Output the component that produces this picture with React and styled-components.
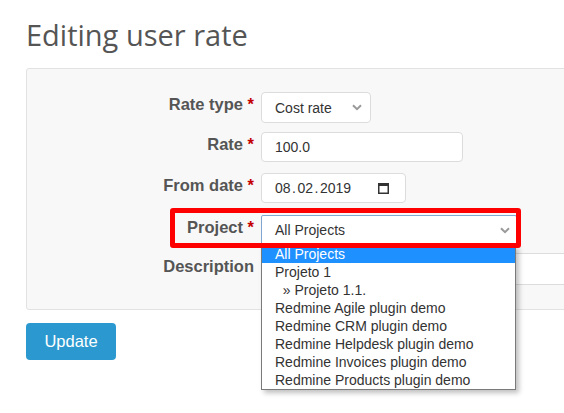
import React from "react";
import styled, { createGlobalStyle } from "styled-components";

const GlobalStyle = createGlobalStyle`
  html {
    overflow: hidden;
  }
  body {
    margin: 0;
    padding: 0;
    min-height: 413px;
    background: #ffffff;
    font-family: "Liberation Sans", Arial, sans-serif;
    color: #333;
  }
`;

const Page = styled.div`
  width: 760px;
  padding: 17px 0 0 26px;
`;

const Title = styled.h2`
  margin: 0 0 15px;
  font-family: "Open Sans", "Liberation Sans", sans-serif;
  font-weight: 400;
  font-size: 29px;
  line-height: 36px;
  color: #555;
`;

const Panel = styled.div`
  width: 700px;
  box-sizing: border-box;
  background: #f8f8f8;
  border: 1px solid #e2e2e2;
  border-radius: 3px;
  padding: 23px 0 24px;
  display: flex;
  flex-direction: column;
`;

const Row = styled.div`
  position: relative;
  display: grid;
  grid-template-columns: 228px auto;
  column-gap: 6px;
  align-items: start;
  margin-top: ${(p) => p.$mt || 0}px;
  height: ${(p) => p.$h}px;
`;

const Label = styled.label`
  text-align: right;
  padding: ${(p) => p.$pt ?? 2}px 1px 0 0;
  font-size: 16.5px;
  line-height: 20px;
  font-weight: 700;
  color: #555;
`;

const Required = styled.span`
  color: #c40000;
`;

const Control = styled.div`
  position: relative;
  box-sizing: border-box;
  width: ${(p) => p.$w}px;
  height: 100%;
  background: #fff;
  border: 1px solid ${(p) => (p.$focus ? "#7fa7cf" : "#dcdcdc")};
  border-radius: ${(p) => (p.$focus ? 2 : 4)}px;
  display: flex;
  align-items: center;
  padding: 0 ${(p) => p.$pr ?? 8}px 0 13px;
  font-size: 14px;
  color: #333;
`;

const Value = styled.span`
  flex: 1;
  white-space: nowrap;
`;

const Dot = styled.span`
  margin: 0 1.5px;
`;

const Highlight = styled.div`
  position: absolute;
  left: 143px;
  top: -7px;
  width: 351px;
  height: 40px;
  box-sizing: border-box;
  border: 5px solid #ff0000;
  border-radius: 3px;
  z-index: 3;
  pointer-events: none;
`;

const OptionList = styled.ul`
  position: absolute;
  top: 29px;
  left: -1px;
  width: 255px;
  box-sizing: border-box;
  margin: 0;
  padding: 0;
  list-style: none;
  background: #fff;
  border: 1px solid #7a7a7a;
  border-top: none;
  box-shadow: 3px 3px 5px rgba(0, 0, 0, 0.25);
  z-index: 2;
`;

const Option = styled.li`
  height: 18px;
  line-height: 18px;
  padding-left: 13px;
  font-size: 14px;
  white-space: pre;
  color: ${(p) => (p.$selected ? "#fff" : "#333")};
  background: ${(p) => (p.$selected ? "#1e90ff" : "transparent")};
`;

const Actions = styled.div`
  margin-top: 13px;
`;

const Button = styled.button`
  width: 90px;
  height: 37px;
  border: none;
  border-radius: 4px;
  background: #2b99cf;
  color: #fff;
  font-family: "Liberation Sans", Arial, sans-serif;
  font-size: 16.5px;
  padding: 0;
  cursor: pointer;
`;

const Chevron = ({ w = 10 }) => (
  <svg width={w} height="7" viewBox="0 0 10 7" fill="none">
    <path d="M1 1.2 L5 5.2 L9 1.2" stroke="#9a9a9a" strokeWidth="2" />
  </svg>
);

const CalendarIcon = () => (
  <svg width="11" height="11" viewBox="0 0 11 11">
    <rect x="0.75" y="0.75" width="9.5" height="9.5" fill="none" stroke="#333" strokeWidth="1.5" />
    <rect x="0" y="0" width="11" height="3" fill="#333" />
  </svg>
);

const projects = [
  "All Projects",
  "Projeto 1",
  "\u00a0\u00a0» Projeto 1.1.",
  "Redmine Agile plugin demo",
  "Redmine CRM plugin demo",
  "Redmine Helpdesk plugin demo",
  "Redmine Invoices plugin demo",
  "Redmine Products plugin demo",
];

export default function App() {
  return (
    <>
      <GlobalStyle />
      <Page>
        <Title>Editing user rate</Title>
        <Panel>
          <Row $h={31}>
            <Label>
              Rate type <Required>*</Required>
            </Label>
            <Control $w={110}>
              <Value>Cost rate</Value>
              <Chevron />
            </Control>
          </Row>
          <Row $h={30} $mt={9}>
            <Label>
              Rate <Required>*</Required>
            </Label>
            <Control $w={202}>
              <Value>100.0</Value>
            </Control>
          </Row>
          <Row $h={30} $mt={11}>
            <Label>
              From date <Required>*</Required>
            </Label>
            <Control $w={145} $pr={16}>
              <Value>
                08<Dot>.</Dot>02<Dot>.</Dot>2019
              </Value>
              <CalendarIcon />
            </Control>
          </Row>
          <Row $h={30} $mt={12}>
            <Highlight />
            <Label>
              Project <Required>*</Required>
            </Label>
            <Control $w={256} $focus $pr={5}>
              <Value>All Projects</Value>
              <Chevron w={12} />
              <OptionList>
                {projects.map((name, i) => (
                  <Option key={name} $selected={i === 0}>
                    {name}
                  </Option>
                ))}
              </OptionList>
            </Control>
          </Row>
          <Row $h={32} $mt={8}>
            <Label $pt={3}>Description</Label>
            <Control $w={420} />
          </Row>
        </Panel>
        <Actions>
          <Button>Update</Button>
        </Actions>
      </Page>
    </>
  );
}
